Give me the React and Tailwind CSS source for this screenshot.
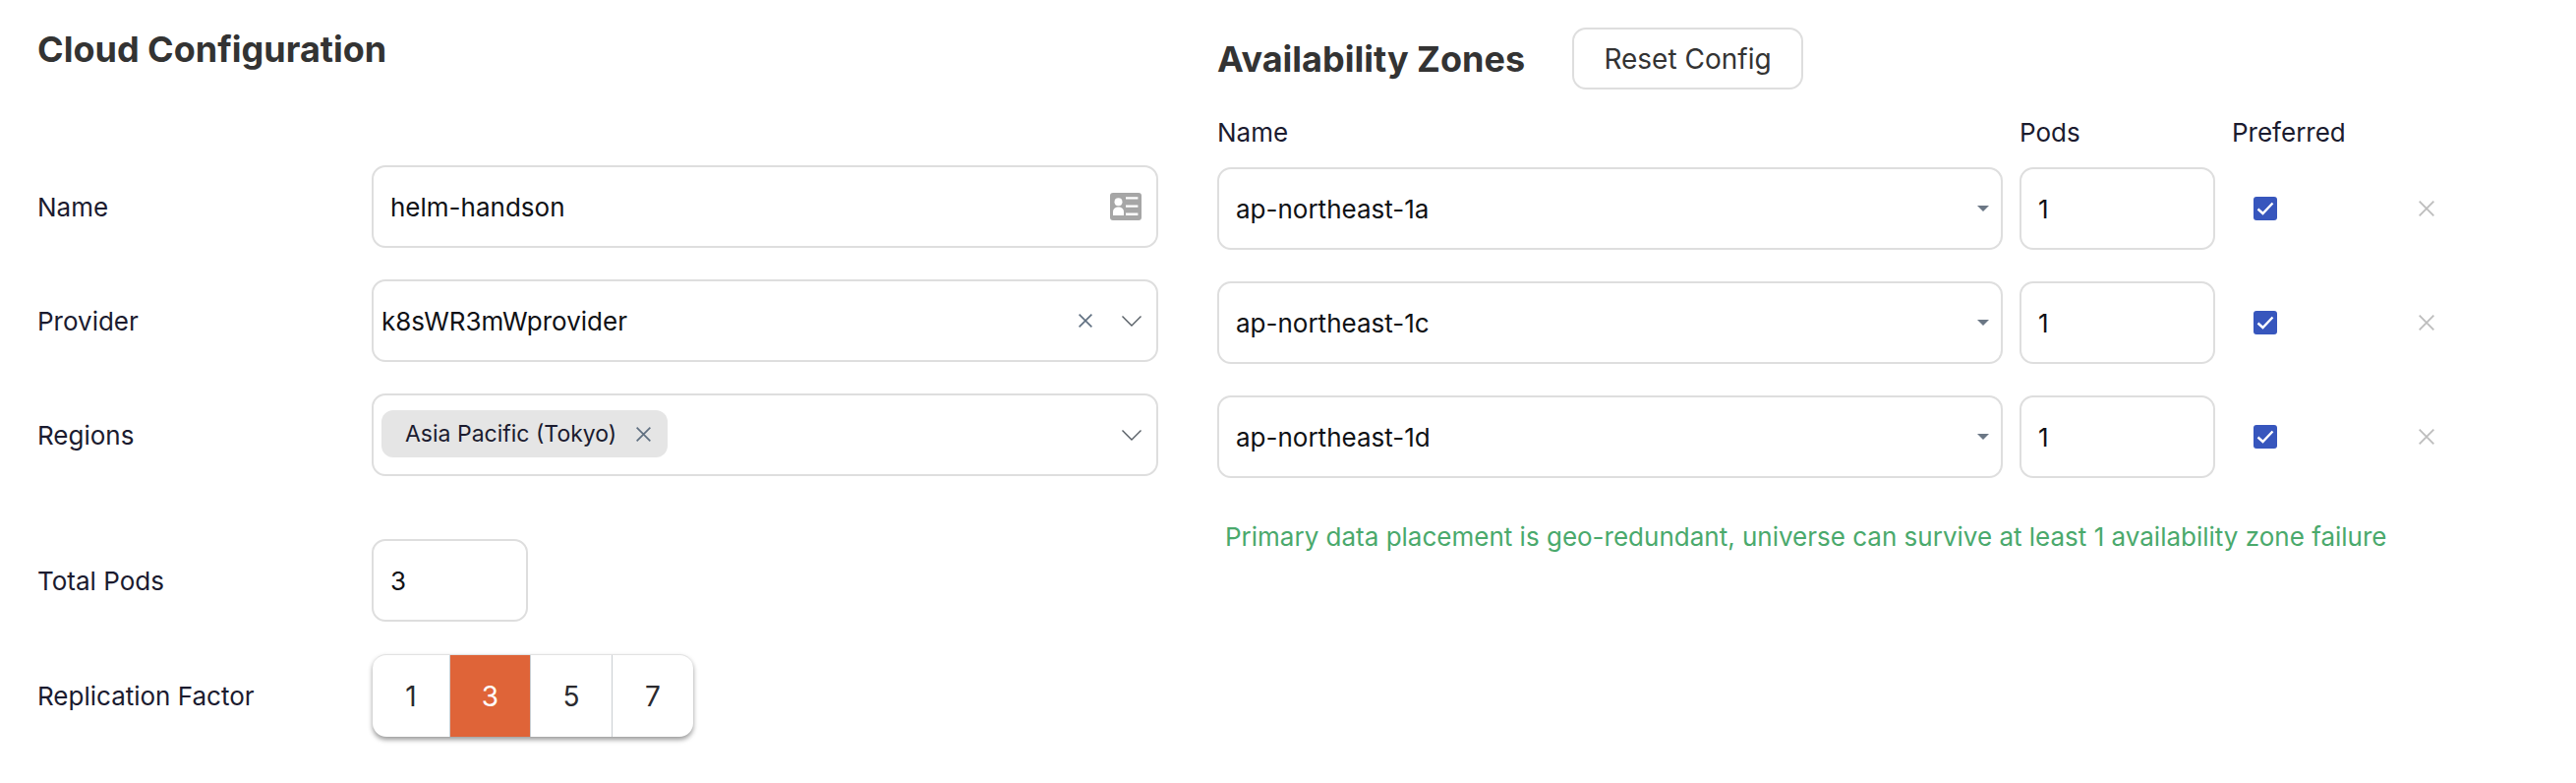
import React from 'react';

const boxClass = 'flex items-center h-[84px] border-2 border-[#dedede] rounded-[14px] bg-white';

const CloseIcon = ({ size = 14, color = '#5f6f80' }) => (
  <svg width={size} height={size} viewBox="0 0 14 14" fill="none" stroke={color} strokeWidth="1.6" className="shrink-0">
    <path d="M0.6 0.6 13.4 13.4M13.4 0.6 0.6 13.4" />
  </svg>
);

const Chevron = () => (
  <svg width="20" height="11" viewBox="0 0 20 11" fill="none" stroke="#555c63" strokeWidth="1.4" className="shrink-0">
    <path d="M0.5 0.5 10 10 19.5 0.5" />
  </svg>
);

// contact card glyph from the name field
const CardIcon = () => (
  <svg width="32" height="28" viewBox="0 0 32 28" className="shrink-0">
    <rect width="32" height="28" rx="3" fill="#a6a6a6" />
    <circle cx="8.5" cy="9.2" r="4" fill="#fff" />
    <path d="M3 23v-3.5C3 16.2 5.4 14.5 8.5 14.5S14 16.2 14 19.5V23z" fill="#fff" />
    <path d="M16 4.2h12.4v2.4H16zM16 12.4h12.4v2.4H16zM16 20.6h12.4V23H16z" fill="#fff" />
  </svg>
);

const FormRow = ({ label, className = '', children }) => (
  <div className={`flex items-center ${className}`}>
    <div className="w-[340px] shrink-0 text-[26px] text-[#1b1b2f]">{label}</div>
    {children}
  </div>
);

const ZoneRow = ({ name }) => (
  <div className="flex items-center">
    <div className={`${boxClass} w-[799px] pl-[17px] pr-[12px] justify-between`}>
      <span className="text-[26px] text-[#0f1115]">{name}</span>
      <span className="w-0 h-0 border-l-[6px] border-r-[6px] border-t-[6px] border-l-transparent border-r-transparent border-t-[#6b7785]" />
    </div>
    <div className={`${boxClass} w-[199px] ml-[17px] pl-[17px] text-[26px] text-[#0f1115]`}>1</div>
    <div className="w-[24px] h-[24px] ml-[39px] rounded-[3px] bg-[#3756bd] flex items-center justify-center">
      <svg width="18" height="14" viewBox="0 0 18 14" fill="none" stroke="#fff" strokeWidth="2.4">
        <path d="M1.5 7.5 6.5 12 16.5 1.5" />
      </svg>
    </div>
    <div className="ml-[144px]">
      <CloseIcon size={16} color="#bdbdbd" />
    </div>
  </div>
);

export default function App() {
  return (
    <div className="flex h-[796px] w-[2620px] bg-white font-['Inter',sans-serif]">
      {/* left column */}
      <div className="w-[1238px] shrink-0 pl-[38px]">
        <h2 className="h-[168px] pt-[30px] text-[36px] leading-[40px] font-bold text-[#333333]">Cloud Configuration</h2>

        <FormRow label="Name">
          <div className={`${boxClass} w-[800px] pl-[17px] pr-[15px] justify-between`}>
            <span className="text-[26px] text-[#0f1115]">helm-handson</span>
            <CardIcon />
          </div>
        </FormRow>

        <FormRow label="Provider" className="mt-[32px]">
          <div className={`${boxClass} w-[800px] pl-[8px] pr-[15px]`}>
            <span className="text-[26px] text-[#0f1115]">k8sWR3mWprovider</span>
            <span className="ml-auto mr-[30px]"><CloseIcon /></span>
            <Chevron />
          </div>
        </FormRow>

        <FormRow label="Regions" className="mt-[32px]">
          <div className={`${boxClass} w-[800px] pl-[8px] pr-[15px] justify-between`}>
            <div className="flex items-center h-[48px] pl-[24px] pr-[17px] mb-[2px] rounded-[12px] bg-[#e5e5e5]">
              <span className="text-[23px] text-[#1b1b2f]">Asia Pacific (Tokyo)</span>
              <span className="ml-[20px]"><CloseIcon size={15} /></span>
            </div>
            <Chevron />
          </div>
        </FormRow>

        <FormRow label="Total Pods" className="mt-[64px]">
          <div className={`${boxClass} w-[159px] pl-[17px] text-[26px] text-[#0f1115]`}>3</div>
        </FormRow>

        <FormRow label="Replication Factor" className="mt-[33px]">
          <div className="flex h-[84px] w-[326px] ml-px rounded-[14px] bg-white border-t border-[#e2e2e2] shadow-[0_3px_5px_rgba(0,0,0,0.4)] overflow-hidden text-[28px] text-[#2a2a2e]">
            <div className="w-[78px] flex items-center justify-center">1</div>
            <div className="w-[83px] flex items-center justify-center bg-[#df6438] text-white border-x border-[#c9ced2]">3</div>
            <div className="w-[83px] flex items-center justify-center border-r border-[#c9ced2]">5</div>
            <div className="flex-1 flex items-center justify-center">7</div>
          </div>
        </FormRow>
      </div>

      {/* right column */}
      <div className="flex-1">
        <div className="flex items-center pt-[28px]">
          <h2 className="w-[361px] text-[36px] leading-[40px] font-bold text-[#333333]">Availability Zones</h2>
          <button className="flex items-center justify-center w-[235px] h-[63px] border-2 border-[#dedede] rounded-[14px] text-[28px] text-[#333333]">Reset Config</button>
        </div>
        <div className="flex mt-[29px] h-[29px] items-center text-[26px] text-[#1b1b2f]">
          <div className="w-[816px]">Name</div>
          <div className="w-[216px]">Pods</div>
          <div>Preferred</div>
        </div>
        <div className="flex flex-col gap-[32px] mt-[21px]">
          <ZoneRow name="ap-northeast-1a" />
          <ZoneRow name="ap-northeast-1c" />
          <ZoneRow name="ap-northeast-1d" />
        </div>
        <p className="mt-[45px] ml-[8px] text-[26px] leading-[30px] text-[#4aa96c]">Primary data placement is geo-redundant, universe can survive at least 1 availability zone failure</p>
      </div>
    </div>
  );
}
